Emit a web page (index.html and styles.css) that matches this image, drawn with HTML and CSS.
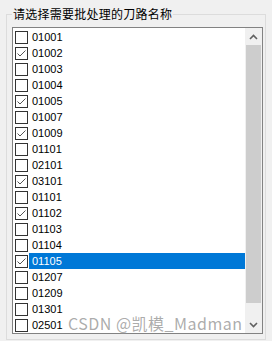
FILE: index.html
```html
<!DOCTYPE html>
<html>
<head>
<meta charset="utf-8">
<link rel="stylesheet" href="styles.css">
</head>
<body>
<div class="group">
  <div class="title">请选择需要批处理的刀路名称</div>
  <div class="list">
    <div class="items">
      <div class="row"><span class="box"></span><span class="label">01001</span></div>
      <div class="row"><span class="box"><svg viewBox="0 0 11 11"><polyline points="1.5,5.5 4,8 9.5,2.5"/></svg></span><span class="label">01002</span></div>
      <div class="row"><span class="box"></span><span class="label">01003</span></div>
      <div class="row"><span class="box"></span><span class="label">01004</span></div>
      <div class="row"><span class="box"><svg viewBox="0 0 11 11"><polyline points="1.5,5.5 4,8 9.5,2.5"/></svg></span><span class="label">01005</span></div>
      <div class="row"><span class="box"></span><span class="label">01007</span></div>
      <div class="row"><span class="box"><svg viewBox="0 0 11 11"><polyline points="1.5,5.5 4,8 9.5,2.5"/></svg></span><span class="label">01009</span></div>
      <div class="row"><span class="box"></span><span class="label">01101</span></div>
      <div class="row"><span class="box"></span><span class="label">02101</span></div>
      <div class="row"><span class="box"><svg viewBox="0 0 11 11"><polyline points="1.5,5.5 4,8 9.5,2.5"/></svg></span><span class="label">03101</span></div>
      <div class="row"><span class="box"></span><span class="label">01101</span></div>
      <div class="row"><span class="box"><svg viewBox="0 0 11 11"><polyline points="1.5,5.5 4,8 9.5,2.5"/></svg></span><span class="label">01102</span></div>
      <div class="row"><span class="box"></span><span class="label">01103</span></div>
      <div class="row"><span class="box"></span><span class="label">01104</span></div>
      <div class="row"><span class="box"><svg viewBox="0 0 11 11"><polyline points="1.5,5.5 4,8 9.5,2.5"/></svg></span><span class="label selected">01105</span></div>
      <div class="row"><span class="box"></span><span class="label">01207</span></div>
      <div class="row"><span class="box"></span><span class="label">01209</span></div>
      <div class="row"><span class="box"></span><span class="label">01301</span></div>
      <div class="row"><span class="box"></span><span class="label">02501</span></div>
    </div>
    <div class="scrollbar">
      <div class="btn"><svg viewBox="0 0 9 6"><polyline points="1,5 4.5,1.5 8,5"/></svg></div>
      <div class="thumb"></div>
      <div class="track"></div>
      <div class="btn"><svg viewBox="0 0 9 6"><polyline points="1,1 4.5,4.5 8,1"/></svg></div>
    </div>
  </div>
</div>
<div class="watermark">CSDN @凯模_Madman</div>
</body>
</html>
```

FILE: styles.css
```css
html, body {
  margin: 0;
  padding: 0;
}
body {
  background: #f0f0f0;
  width: 272px;
  height: 341px;
  overflow: hidden;
  position: relative;
  font-family: "Liberation Sans", "Noto Sans CJK SC", sans-serif;
  color: #000;
}
.group {
  margin: 14px 6px 0 6px;
  border: 1px solid #dcdcdc;
  padding: 0 2px 5px 5px;
}
.title {
  margin: -9px 0 0 0;
  padding: 0 1px;
  width: fit-content;
  background: #f0f0f0;
  font-family: "Noto Sans CJK SC", sans-serif;
  font-size: 12px;
  line-height: 16px;
  letter-spacing: 0.25px;
}
.list {
  margin-top: 5px;
  width: 249px;
  height: 305px;
  border: 1px solid #828282;
  background: #fff;
  display: flex;
}
.items {
  flex: 1;
  padding: 1px 0 0 1px;
  overflow: hidden;
}
.row {
  height: 16px;
  display: flex;
  align-items: center;
}
.box {
  width: 11px;
  height: 11px;
  margin-left: 1px;
  border: 1px solid #333;
  background: #fff;
  display: flex;
}
.box svg {
  width: 11px;
  height: 11px;
  fill: none;
  stroke: #555;
  stroke-width: 1;
}
.label {
  margin-left: 1px;
  padding-left: 3px;
  flex: 1;
  height: 16px;
  line-height: 16px;
  font-size: 11px;
}
.label.selected {
  background: #0078d7;
  color: #fff;
}
.scrollbar {
  width: 17px;
  background: #f0f0f0;
  display: flex;
  flex-direction: column;
}
.btn {
  height: 17px;
  display: flex;
  align-items: center;
  justify-content: center;
}
.btn svg {
  width: 9px;
  height: 6px;
  fill: none;
  stroke: #606060;
  stroke-width: 1.6;
}
.thumb {
  height: 258px;
  margin: 0 1px;
  background: #cdcdcd;
}
.track {
  flex: 1;
}
.watermark {
  position: absolute;
  left: 68px;
  top: 313px;
  font-family: "Noto Sans CJK SC", sans-serif;
  font-size: 16px;
  line-height: 20px;
  letter-spacing: 0.5px;
  color: rgba(135, 135, 135, 0.7);
  text-shadow: 0 0 1px rgba(255, 255, 255, 0.9);
  white-space: nowrap;
}
```
